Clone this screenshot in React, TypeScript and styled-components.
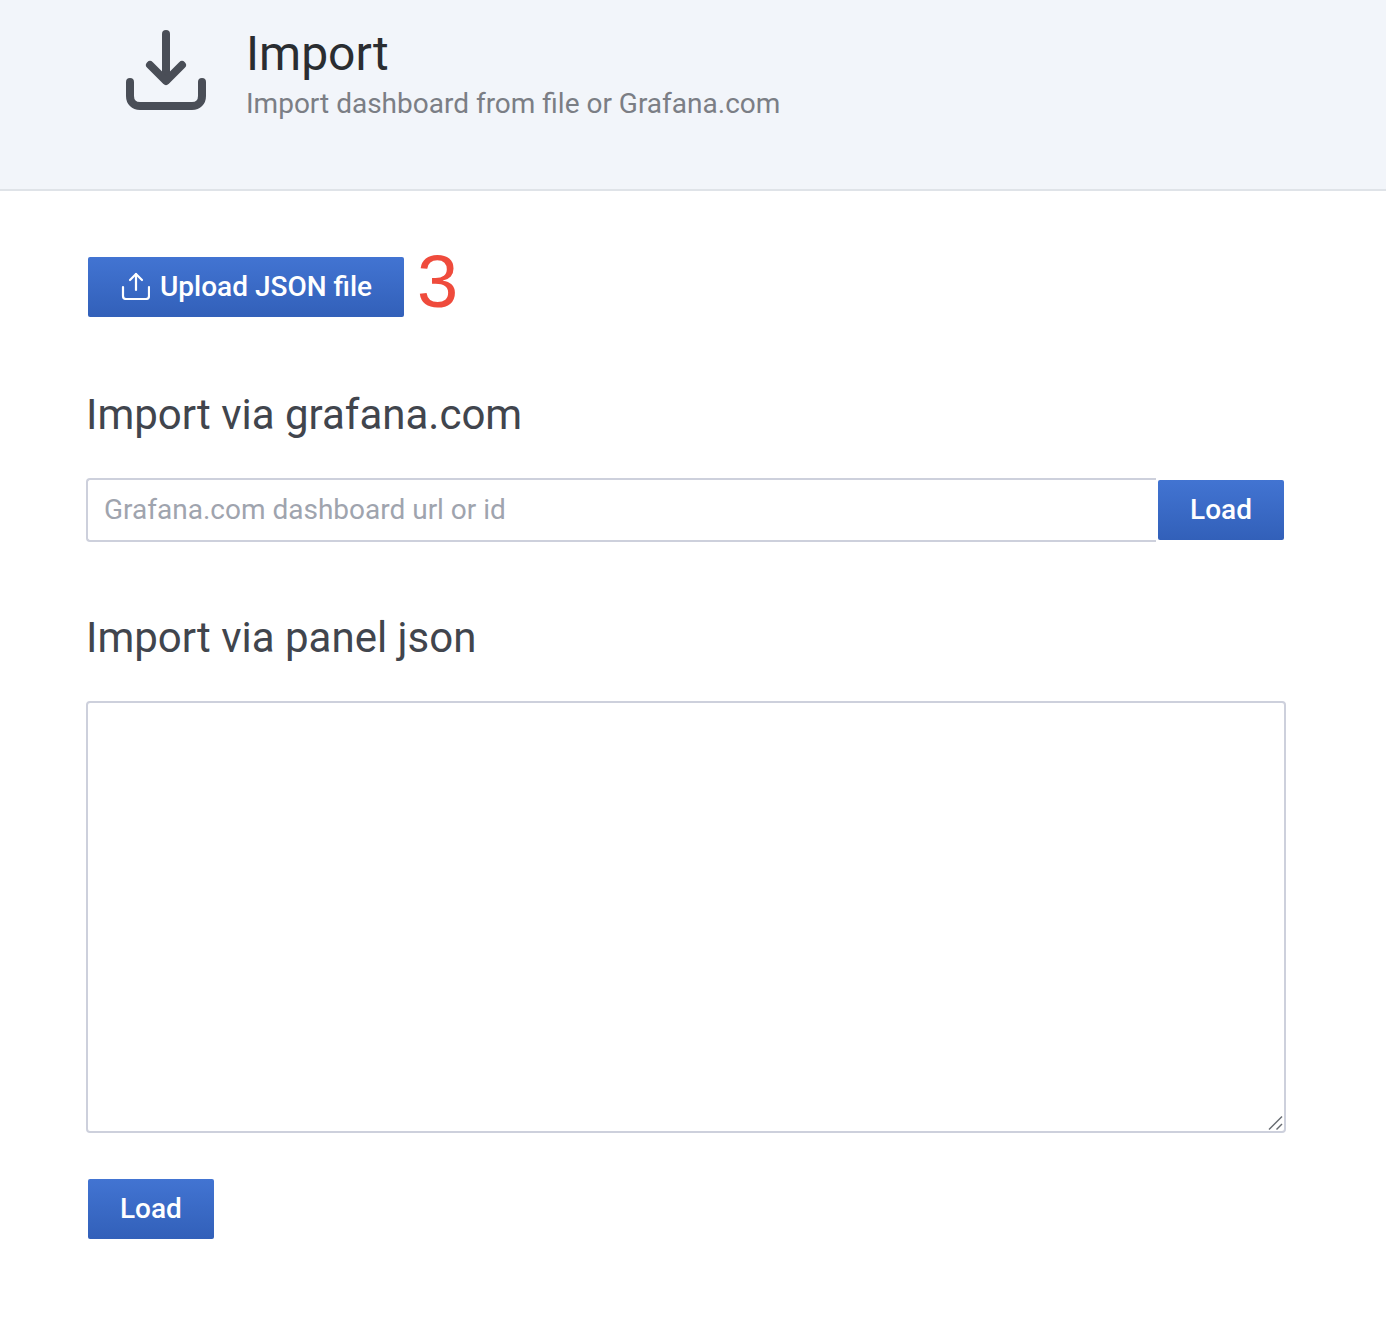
import React from "react";
import styled, { createGlobalStyle } from "styled-components";

const GlobalStyle = createGlobalStyle`
  html, body {
    margin: 0;
    padding: 0;
    background: #fff;
    font-family: Roboto, "Liberation Sans", sans-serif;
  }
  * {
    box-sizing: border-box;
  }
`;

const Header = styled.header`
  height: 191px;
  padding: 30px 0 0 126px;
  display: flex;
  align-items: flex-start;
  gap: 40px;
  background: #f2f5fa;
  border-bottom: 2px solid #dfe3e8;
`;

const HeaderIcon = styled.svg`
  width: 80px;
  height: 80px;
  flex: none;
  color: #4a4e57;
`;

const HeaderText = styled.div`
  display: flex;
  flex-direction: column;
`;

const Title = styled.h1`
  margin: 1px 0 0;
  font-size: 48px;
  line-height: 46px;
  font-weight: 400;
  color: #2a2d31;
`;

const Subtitle = styled.div`
  margin-top: 10px;
  font-size: 28px;
  line-height: 34px;
  color: #7b7e85;
`;

const Content = styled.main`
  padding: 66px 100px 0 86px;
`;

const UploadRow = styled.div`
  display: flex;
  align-items: flex-start;
  gap: 13px;
  padding-left: 2px;
  height: 60px;
`;

const Annotation = styled.span`
  font-family: "Liberation Sans", Arial, sans-serif;
  font-size: 74px;
  line-height: 50px;
  color: #ef4b3c;
`;

const Button = styled.button`
  height: 60px;
  padding: 0 32px 2px;
  display: inline-flex;
  align-items: center;
  justify-content: center;
  gap: 10px;
  border: none;
  border-radius: 2px;
  background: linear-gradient(180deg, #4274d2, #3260b9);
  color: #fff;
  font-family: inherit;
  font-size: 28px;
  font-weight: 500;
  cursor: pointer;
`;

const SectionTitle = styled.h2`
  margin: 70px 0 0;
  font-size: 42px;
  line-height: 56px;
  font-weight: 400;
  color: #41454d;
`;

const InputRow = styled.div`
  margin-top: 35px;
  display: flex;
  align-items: center;
  gap: 2px;
  width: 1198px;
`;

const UrlInput = styled.input`
  flex: 1;
  height: 64px;
  padding: 0 16px 2px;
  border: 2px solid #cdd0dc;
  border-right: none;
  border-radius: 4px 0 0 4px;
  font-family: inherit;
  font-size: 28px;
  color: #41454d;
  outline: none;

  &::placeholder {
    color: #9fa4ae;
    opacity: 1;
  }
`;

const PanelTitle = styled(SectionTitle)`
  margin-top: 68px;
`;

const AreaWrap = styled.div`
  position: relative;
  margin-top: 35px;
  width: 1200px;
  height: 432px;
`;

const JsonArea = styled.textarea`
  display: block;
  width: 100%;
  height: 100%;
  padding: 16px;
  border: 2px solid #cdd0dc;
  border-radius: 4px;
  font-family: inherit;
  font-size: 28px;
  outline: none;
  resize: none;
`;

const ResizeGrip = styled.svg`
  position: absolute;
  right: 2px;
  bottom: 2px;
  width: 16px;
  height: 16px;
  pointer-events: none;
  color: #666a70;
`;

const SubmitRow = styled.div`
  margin-top: 46px;
  padding-left: 2px;
  padding-bottom: 103px;
`;

const App: React.FC = () => {
  return (
    <>
      <GlobalStyle />
      <Header>
        <HeaderIcon viewBox="0 0 80 80" fill="none" stroke="currentColor" strokeWidth="8" strokeLinecap="round" strokeLinejoin="round">
          <path d="M40 4V50" />
          <path d="M24 35L40 51L56 35" />
          <path d="M4 52V66C4 72 8 76 14 76H66C72 76 76 72 76 66V52" />
        </HeaderIcon>
        <HeaderText>
          <Title>Import</Title>
          <Subtitle>Import dashboard from file or Grafana.com</Subtitle>
        </HeaderText>
      </Header>
      <Content>
        <UploadRow>
          <Button>
            <svg width="30" height="28" viewBox="-2 0 30 28" fill="none" stroke="currentColor" strokeWidth="2.2" strokeLinecap="round" strokeLinejoin="round">
              <path d="M14 18V2" />
              <path d="M8 8L14 2L20 8" />
              <path d="M1 15V24C1 25.5 2 27 4 27H24C26 27 27 25.5 27 24V15" />
            </svg>
            Upload JSON file
          </Button>
          <Annotation>3</Annotation>
        </UploadRow>
        <SectionTitle>Import via grafana.com</SectionTitle>
        <InputRow>
          <UrlInput placeholder="Grafana.com dashboard url or id" />
          <Button>Load</Button>
        </InputRow>
        <PanelTitle>Import via panel json</PanelTitle>
        <AreaWrap>
          <JsonArea />
          <ResizeGrip viewBox="0 0 16 16" fill="none" stroke="currentColor" strokeWidth="1.4">
            <path d="M1 14.5L14 1.5" />
            <path d="M8.5 14.5L14 9" />
          </ResizeGrip>
        </AreaWrap>
        <SubmitRow>
          <Button>Load</Button>
        </SubmitRow>
      </Content>
    </>
  );
};

export default App;
